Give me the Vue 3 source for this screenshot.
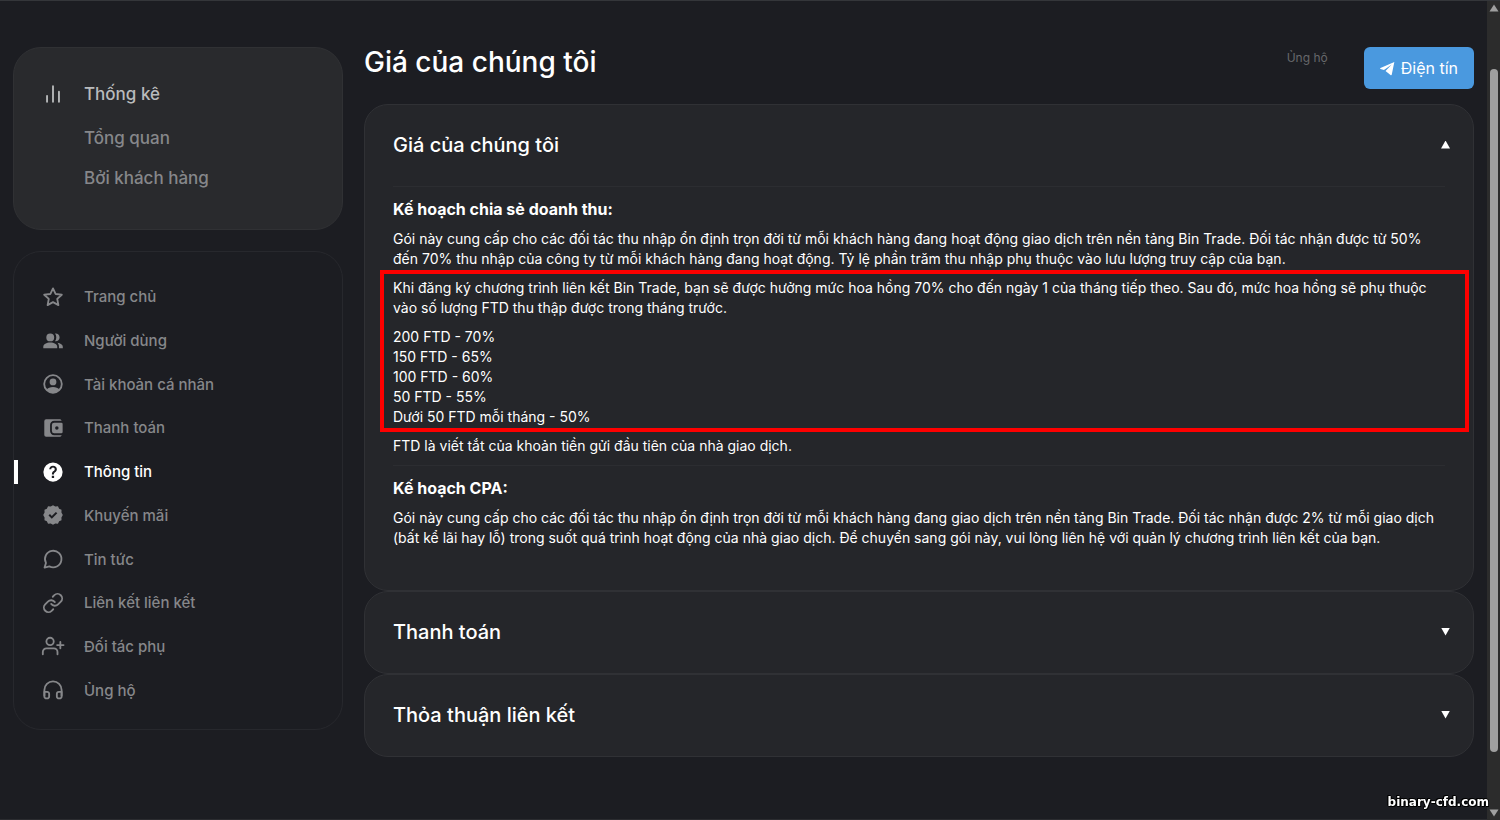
<script setup>
import { ref } from 'vue'

const menu = [
  { icon: 'star', label: 'Trang chủ' },
  { icon: 'users', label: 'Người dùng' },
  { icon: 'account', label: 'Tài khoản cá nhân' },
  { icon: 'wallet', label: 'Thanh toán' },
  { icon: 'help', label: 'Thông tin', active: true },
  { icon: 'verified', label: 'Khuyến mãi' },
  { icon: 'message', label: 'Tin tức' },
  { icon: 'link', label: 'Liên kết liên kết' },
  { icon: 'userPlus', label: 'Đối tác phụ' },
  { icon: 'headphones', label: 'Ủng hộ' },
]

const icons = {
  star: { line: ['M12 2.6l2.8 6.1 6.8.8-5 4.6 1.3 6.8-5.9-3.3-5.9 3.3 1.3-6.8-5-4.6 6.8-.8z'] },
  users: {
    fill: [
      'M9 3.8a4.3 4.3 0 1 1 0 8.6 4.3 4.3 0 0 1 0-8.6z',
      'M1.4 20v-1.8c0-2.8 3.4-4.6 7.6-4.6s7.6 1.8 7.6 4.6V20z',
      'M14.2 3.9c2.7-.4 5 1.5 5 4.2s-2.3 4.6-5 4.2c1.9-2.4 1.9-6 0-8.4z',
      'M16.8 13.8c3.4.5 5.9 2.1 5.9 4.4V20h-4.2v-1.8c0-1.8-.6-3.3-1.7-4.4z',
    ],
  },
  account: {
    line: ['M12 2.4a9.6 9.6 0 1 1 0 19.2 9.6 9.6 0 0 1 0-19.2z'],
    fill: [
      'M12 6a3.7 3.7 0 1 1 0 7.4A3.7 3.7 0 0 1 12 6z',
      'M5 18.2c1.3-2 4-3 7-3s5.7 1 7 3c-1.7 2.2-4.2 3.4-7 3.4s-5.3-1.2-7-3.4z',
    ],
  },
  wallet: {
    fill: [
      'M4.5 2.500h14.700c1.100 0 2 .7 2.200 1.700h-8.100a4.500 4.500 0 0 0-4.500 4.500v6.600a4.500 4.500 0 0 0 4.500 4.500h8.100c-.2 1-1.100 1.700-2.200 1.700H4.500a2 2 0 0 1-2-2v-15a2 2 0 0 1 2-2z',
      'M13.300 6.200h7.700a1.500 1.500 0 0 1 1.500 1.500v8.600a1.500 1.500 0 0 1-1.500 1.500h-7.700a2.500 2.500 0 0 1-2.500-2.500V8.700a2.500 2.500 0 0 1 2.500-2.500zm2.900 3.900a1.900 1.900 0 1 0 0 3.800 1.900 1.900 0 0 0 0-3.800z',
    ],
  },
  help: {
    fill: [
      'M12 1.500a10.500 10.500 0 1 1 0 21 10.500 10.500 0 0 1 0-21zm0 3.700c-2.300 0-4.100 1.600-4.100 3.900h2.200c0-1.200.8-2 1.900-2s1.900.8 1.900 1.800c0 .9-.5 1.400-1.300 2.100-1.100.9-1.800 1.700-1.800 3.600h2.200c0-1 .4-1.500 1.300-2.200 1.100-.9 1.900-1.900 1.900-3.500 0-2.200-1.800-3.700-4.200-3.700zm-1.300 10.900v2.500h2.500v-2.500z',
    ],
  },
  verified: {
    fill: [
      'M12 1.300l2.500 1.500 2.900-.3 1.300 2.600 2.600 1.300-.1 2.900L22.700 12l-1.500 2.700.1 2.900-2.600 1.300-1.300 2.600-2.900-.3-2.500 1.500-2.500-1.500-2.900.3-1.300-2.600-2.600-1.300.1-2.900L1.300 12l1.500-2.700-.1-2.900 2.600-1.300 1.300-2.600 2.900.3zM10.700 16.200l6-6-1.600-1.600-4.400 4.400-2-2-1.600 1.600z',
    ],
  },
  message: { line: ['M2.800 21.400l1.500-5.100a9 9 0 1 1 3.700 3.700z'] },
  link: {
    line: [
      'M10 13a5 5 0 0 0 7.540.54l3-3a5 5 0 0 0-7.070-7.070l-1.720 1.710',
      'M14 11a5 5 0 0 0-7.540-.54l-3 3a5 5 0 0 0 7.070 7.070l1.710-1.710',
    ],
  },
  userPlus: {
    line: [
      'M8.800 3a4 4 0 1 1 0 8 4 4 0 0 1 0-8z',
      'M.900 21v-2.500a4 4 0 0 1 4-4h8a4 4 0 0 1 4 4V21',
      'M20 7.500v7M16.500 11h7',
    ],
  },
  headphones: {
    line: [
      'M2.600 18v-6a9.400 9.400 0 0 1 18.800 0v6',
      'M21.400 19a2.200 2.200 0 0 1-2.200 2.200h-.8a2.200 2.200 0 0 1-2.200-2.200v-2.800a2.200 2.200 0 0 1 2.200-2.200h3zM2.600 19a2.200 2.200 0 0 0 2.200 2.200h.8a2.200 2.200 0 0 0 2.200-2.200v-2.800A2.200 2.200 0 0 0 5.600 14h-3z',
    ],
  },
}

const open = ref('price')
const toggle = (id) => {
  open.value = open.value === id ? '' : id
}
</script>

<template>
  <div class="page">
    <aside class="sidebar">
      <nav class="panel stats" aria-label="Thống kê">
        <a href="#" class="stats-head">
          <svg class="icon" viewBox="0 0 24 24" aria-hidden="true">
            <path class="line" d="M5.500 14v6.500M12 3.500v17M18.500 9.500v11" />
          </svg>
          <span>Thống kê</span>
        </a>
        <a href="#" class="stats-sub">Tổng quan</a>
        <a href="#" class="stats-sub">Bởi khách hàng</a>
      </nav>

      <nav class="panel menu" aria-label="Menu">
        <ul>
          <li v-for="item in menu" :key="item.label">
            <a href="#" :class="{ active: item.active }">
              <svg class="icon" viewBox="0 0 24 24" aria-hidden="true">
                <path v-for="d in icons[item.icon].line" :key="d" class="line" :d="d" />
                <path v-for="d in icons[item.icon].fill" :key="d" class="solid" :d="d" />
              </svg>
              <span>{{ item.label }}</span>
            </a>
          </li>
        </ul>
      </nav>
    </aside>

    <main>
      <header>
        <h1>Giá của chúng tôi</h1>
        <span class="support">Ủng hộ</span>
        <a href="#" class="telegram">
          <svg viewBox="0 0 16 16" aria-hidden="true">
            <path d="M15.300 1.100L.500 7.400c-.5.2-.5.800 0 1l3.700 1.200 8.300-6-6.600 7 5.600 4.500c.4.300.9.100 1-.4z" />
          </svg>
          <span>Điện tín</span>
        </a>
      </header>

      <section class="card">
        <h2>
          <button type="button" :aria-expanded="open === 'price'" @click="toggle('price')">
            Giá của chúng tôi <i :class="open === 'price' ? 'up' : 'down'"></i>
          </button>
        </h2>
        <div v-if="open === 'price'" class="body">
          <hr />
          <h3>Kế hoạch chia sẻ doanh thu:</h3>
          <p>Gói này cung cấp cho các đối tác thu nhập ổn định trọn đời từ mỗi khách hàng đang hoạt động giao dịch trên nền tảng Bin Trade. Đối tác nhận được từ 50% đến 70% thu nhập của công ty từ mỗi khách hàng đang hoạt động. Tỷ lệ phần trăm thu nhập phụ thuộc vào lưu lượng truy cập của bạn.</p>
          <div class="highlight">
            <p>Khi đăng ký chương trình liên kết Bin Trade, bạn sẽ được hưởng mức hoa hồng 70% cho đến ngày 1 của tháng tiếp theo. Sau đó, mức hoa hồng sẽ phụ thuộc vào số lượng FTD thu thập được trong tháng trước.</p>
            <p>
              200 FTD - 70%<br />150 FTD - 65%<br />100 FTD - 60%<br />50 FTD - 55%<br />Dưới 50 FTD mỗi tháng - 50%
            </p>
          </div>
          <p>FTD là viết tắt của khoản tiền gửi đầu tiên của nhà giao dịch.</p>
          <hr />
          <h3>Kế hoạch CPA:</h3>
          <p>Gói này cung cấp cho các đối tác thu nhập ổn định trọn đời từ mỗi khách hàng đang giao dịch trên nền tảng Bin Trade. Đối tác nhận được 2% từ mỗi giao dịch (bất kể lãi hay lỗ) trong suốt quá trình hoạt động của nhà giao dịch. Để chuyển sang gói này, vui lòng liên hệ với quản lý chương trình liên kết của bạn.</p>
        </div>
      </section>

      <section class="card">
        <h2>
          <button type="button" @click="toggle('pay')">Thanh toán <i class="down"></i></button>
        </h2>
      </section>
      <section class="card">
        <h2>
          <button type="button" @click="toggle('terms')">Thỏa thuận liên kết <i class="down"></i></button>
        </h2>
      </section>
    </main>

    <div class="scrollbar" aria-hidden="true">
      <svg viewBox="0 0 10 8"><path d="M5 .5L9.500 7.500h-9z" /></svg>
      <div class="thumb"></div>
      <svg viewBox="0 0 10 8"><path d="M5 7.500L.500.5h9z" /></svg>
    </div>
    <div class="watermark">binary-cfd.com</div>
  </div>
</template>

<style>
body {
  background: #1c1d22;
}
</style>

<style scoped>
.page {
  box-sizing: border-box;
  min-height: 100vh;
  display: flex;
  align-items: flex-start;
  gap: 21px;
  padding: 46px 26px 0 13px;
  border-top: 1px solid #34363a;
  border-bottom: 1px solid #2b2c30;
  background: #1c1d22;
  color: #fff;
  font-family: Inter, "Noto Sans", sans-serif;
}
a {
  color: inherit;
  text-decoration: none;
}
.sidebar {
  flex: 0 0 330px;
  display: flex;
  flex-direction: column;
  gap: 21px;
}
.panel {
  box-sizing: border-box;
  border: 1px solid #27282d;
  border-radius: 28px;
  color: #86878a;
}
.stats {
  display: flex;
  flex-direction: column;
  gap: 12px;
  padding: 32px 28px;
  background: #292a2d;
  border-color: #303134;
  min-height: 183px;
}
.stats-head {
  display: flex;
  align-items: center;
  gap: 20px;
  margin-bottom: 4px;
  line-height: 28px;
  font-size: 17px;
  font-weight: 500;
  color: #b9bbbc;
}
.stats-sub {
  margin-left: 42px;
  line-height: 28px;
  font-size: 17px;
  font-weight: 500;
}
.icon {
  width: 22px;
  height: 22px;
  flex: none;
  overflow: visible;
}
.line {
  fill: none;
  stroke: currentColor;
  stroke-width: 2;
  stroke-linecap: round;
  stroke-linejoin: round;
}
.solid {
  fill: currentColor;
  fill-rule: evenodd;
}
.menu {
  display: flex;
  min-height: 479px;
  padding: 23px 0 17px;
}
.menu ul {
  flex: 1;
  display: grid;
  grid-auto-rows: 1fr;
  margin: 0;
  padding: 0;
  list-style: none;
}
.menu li {
  display: flex;
}
.menu a {
  flex: 1;
  position: relative;
  display: flex;
  align-items: center;
  gap: 20px;
  padding-left: 28px;
  font-size: 15px;
  font-weight: 500;
}
.menu a.active {
  color: #fff;
}
.menu a.active::before {
  content: "";
  position: absolute;
  left: 0;
  width: 4px;
  height: 24px;
  background: #fff;
}
main {
  flex: 1;
  min-width: 0;
}
header {
  display: flex;
  align-items: flex-start;
  margin-bottom: 15px;
}
h1 {
  flex: 1;
  margin: 0;
  font-size: 28px;
  line-height: 30px;
  font-weight: 500;
}
.support {
  margin-right: 36px;
  font-size: 12px;
  line-height: 22px;
  color: #67686b;
}
.telegram {
  display: flex;
  align-items: center;
  gap: 6px;
  padding: 0 16px;
  border-radius: 6px;
  background: #4a99df;
  font-size: 16px;
  line-height: 42px;
}
.telegram svg {
  width: 15px;
  height: 15px;
  fill: #fff;
}
.card {
  border: 1px solid #303135;
  border-radius: 24px;
  background: #25262a;
  padding: 0 28px;
}
h2 {
  margin: 0;
}
h2 button {
  display: flex;
  align-items: center;
  justify-content: space-between;
  width: 100%;
  min-height: 81px;
  padding: 0 0 2px;
  border: 0;
  background: none;
  color: #fff;
  font: 500 20px Inter, "Noto Sans", sans-serif;
  text-align: left;
  cursor: pointer;
}
h2 i {
  width: 9px;
  height: 8px;
  margin-right: -5px;
  background: #fff;
}
.up {
  clip-path: polygon(50% 0, 100% 100%, 0 100%);
}
.down {
  clip-path: polygon(0 0, 100% 0, 50% 100%);
}
.body {
  padding-bottom: 33px;
}
hr {
  margin: 0;
  border: 0;
  border-top: 1px solid #2c2d31;
}
h3 {
  margin: 12px 0 10px;
  font-size: 16px;
  line-height: 20px;
  font-weight: 700;
}
p {
  margin: 0 0 9px;
  font-size: 14px;
  line-height: 20px;
}
.highlight {
  position: relative;
}
.highlight::after {
  content: "";
  position: absolute;
  inset: -8px -24px -5px -13px;
  border: 4px solid #fe0000;
  pointer-events: none;
}
.scrollbar {
  position: fixed;
  top: 1px;
  right: 0;
  bottom: 0;
  width: 13px;
  display: flex;
  flex-direction: column;
  align-items: center;
  justify-content: space-between;
  padding: 3px 0;
  box-sizing: border-box;
  background: #2c2c2c;
}
.scrollbar svg {
  width: 10px;
  height: 8px;
  fill: #9f9f9f;
}
.thumb {
  flex: 0 1 84%;
  width: 8px;
  border-radius: 4px;
  background: #9f9f9f;
}
.watermark {
  position: fixed;
  right: 11px;
  bottom: 10px;
  font: 700 12px/16px "DejaVu Sans", sans-serif;
  color: #fff;
  text-shadow: 1px 0 #000, -1px 0 #000, 0 1px #000, 0 -1px #000, 1px 1px #000, -1px -1px #000;
}
</style>
